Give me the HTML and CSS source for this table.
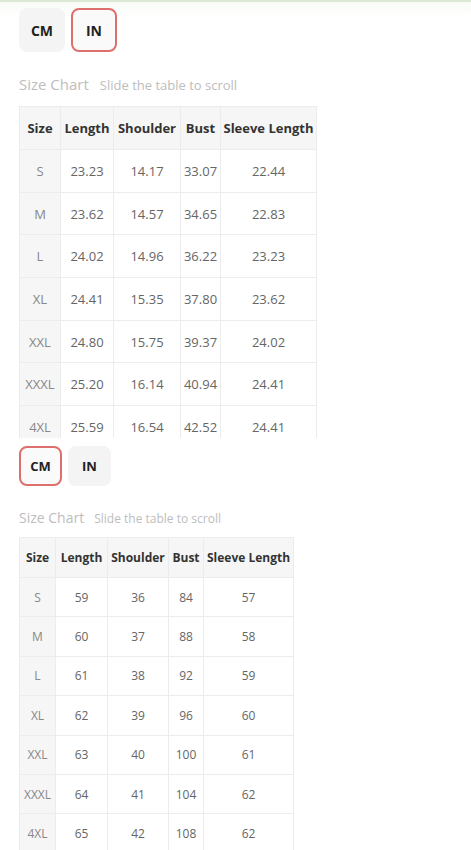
FILE: index.html
```html
<!DOCTYPE html>
<html>
<head>
<meta charset="utf-8">
<link rel="stylesheet" href="styles.css">
</head>
<body>
<section class="shot shot-in">
  <div class="units">
    <button class="unit">CM</button>
    <button class="unit active">IN</button>
  </div>
  <div class="title"><span class="main">Size Chart</span><span class="sub">Slide the table to scroll</span></div>
  <table class="chart">
    <colgroup><col class="c1"><col class="c2"><col class="c3"><col class="c4"><col class="c5"></colgroup>
    <tr><th>Size</th><th>Length</th><th>Shoulder</th><th>Bust</th><th>Sleeve Length</th></tr>
    <tr><th class="sz">S</th><td>23.23</td><td>14.17</td><td>33.07</td><td>22.44</td></tr>
    <tr><th class="sz">M</th><td>23.62</td><td>14.57</td><td>34.65</td><td>22.83</td></tr>
    <tr><th class="sz">L</th><td>24.02</td><td>14.96</td><td>36.22</td><td>23.23</td></tr>
    <tr><th class="sz">XL</th><td>24.41</td><td>15.35</td><td>37.80</td><td>23.62</td></tr>
    <tr><th class="sz">XXL</th><td>24.80</td><td>15.75</td><td>39.37</td><td>24.02</td></tr>
    <tr><th class="sz">XXXL</th><td>25.20</td><td>16.14</td><td>40.94</td><td>24.41</td></tr>
    <tr><th class="sz">4XL</th><td>25.59</td><td>16.54</td><td>42.52</td><td>24.41</td></tr>
  </table>
</section>
<section class="shot shot-cm">
  <div class="units">
    <button class="unit active">CM</button>
    <button class="unit">IN</button>
  </div>
  <div class="title"><span class="main">Size Chart</span><span class="sub">Slide the table to scroll</span></div>
  <table class="chart">
    <colgroup><col class="c1"><col class="c2"><col class="c3"><col class="c4"><col class="c5"></colgroup>
    <tr><th>Size</th><th>Length</th><th>Shoulder</th><th>Bust</th><th>Sleeve Length</th></tr>
    <tr><th class="sz">S</th><td>59</td><td>36</td><td>84</td><td>57</td></tr>
    <tr><th class="sz">M</th><td>60</td><td>37</td><td>88</td><td>58</td></tr>
    <tr><th class="sz">L</th><td>61</td><td>38</td><td>92</td><td>59</td></tr>
    <tr><th class="sz">XL</th><td>62</td><td>39</td><td>96</td><td>60</td></tr>
    <tr><th class="sz">XXL</th><td>63</td><td>40</td><td>100</td><td>61</td></tr>
    <tr><th class="sz">XXXL</th><td>64</td><td>41</td><td>104</td><td>62</td></tr>
    <tr><th class="sz">4XL</th><td>65</td><td>42</td><td>108</td><td>62</td></tr>
  </table>
</section>
</body>
</html>
```
FILE: styles.css
```css
html, body {
  margin: 0;
  padding: 0;
  background: #fff;
  font-family: "Open Sans", "Liberation Sans", sans-serif;
  overflow: hidden;
}
.shot {
  padding-left: 19px;
  overflow: hidden;
}
.shot-in {
  height: 438px;
  border-top: 2px solid #dbe8d6;
  box-sizing: border-box;
  background: linear-gradient(#f7fbf6, #fff 14px);
}
.units {
  display: flex;
  gap: 6px;
}
.unit {
  font-family: inherit;
  font-weight: 700;
  color: #222;
  background: #f4f4f4;
  border: 2px solid #f4f4f4;
  border-radius: 8px;
  padding: 0;
  display: flex;
  align-items: center;
  justify-content: center;
}
.unit.active {
  border-color: #dd6f6c;
  background: #fafafa;
}
.title {
  display: flex;
  align-items: baseline;
  color: #bdbdbd;
}
.chart {
  border-collapse: collapse;
  table-layout: fixed;
  color: #666;
}
.chart th, .chart td {
  border: 1px solid #ececec;
  text-align: center;
  padding: 0;
  white-space: nowrap;
}
.chart tr:first-child th {
  background: #f6f6f6;
  color: #333;
  font-weight: 700;
}
.chart th.sz {
  background: #f6f6f6;
  font-weight: 400;
  color: #888;
}

/* first capture (inches) */
.shot-in .units { margin-top: 6px; }
.shot-in .unit { width: 46px; height: 44px; font-size: 14px; }
.shot-in .title { margin-top: 22px; height: 22px; }
.shot-in .main { font-size: 15px; }
.shot-in .sub { font-size: 13px; margin-left: 11px; }
.shot-in .chart { margin-top: 10px; font-size: 13px; }
.shot-in .chart tr { height: 42.7px; }
.shot-in .chart tr:first-child { height: 43px; }
.shot-in .c1 { width: 41px; }
.shot-in .c2 { width: 53px; }
.shot-in .c3 { width: 67px; }
.shot-in .c4 { width: 40px; }
.shot-in .c5 { width: 96px; }

/* second capture (centimetres) */
.shot-cm .units { margin-top: 8px; }
.shot-cm .unit { width: 43px; height: 40px; font-size: 13px; }
.shot-cm .title { margin-top: 22px; height: 20px; }
.shot-cm .main { font-size: 14px; }
.shot-cm .sub { font-size: 12px; margin-left: 10px; }
.shot-cm .chart { margin-top: 9px; font-size: 12px; }
.shot-cm .chart tr { height: 39.4px; }
.shot-cm .chart tr:first-child { height: 40px; }
.shot-cm .c1 { width: 36px; }
.shot-cm .c2 { width: 52px; }
.shot-cm .c3 { width: 61px; }
.shot-cm .c4 { width: 35px; }
.shot-cm .c5 { width: 90px; }
```
